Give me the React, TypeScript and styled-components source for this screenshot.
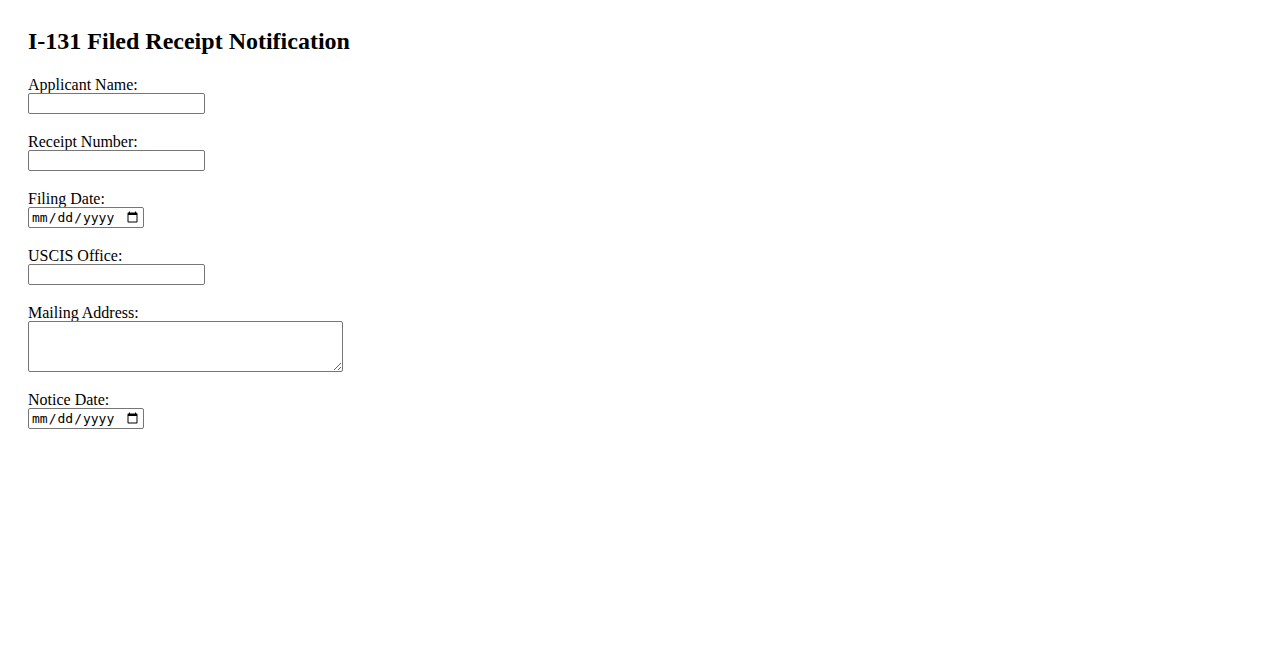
import React from "react";
import styled, { createGlobalStyle } from "styled-components";

const Global = createGlobalStyle`
  html, body { margin: 0; padding: 0; background: #fff; }
  body { font-family: "Liberation Serif", "Times New Roman", serif; color: #000; }
`;

const Page = styled.div`
  padding: 28px;
`;

const Title = styled.h2`
  margin: 0 0 20px;
  font-size: 24px;
  line-height: 27px;
  font-weight: bold;
`;

const Field = styled.div`
  display: flex;
  flex-direction: column;
  align-items: flex-start;
  margin-bottom: 18px;
`;

const Label = styled.label`
  font-size: 16px;
  line-height: 18px;
  display: block;
  padding-top: 1px;
  margin-bottom: -1px;
`;

const controlBase = `
  box-sizing: border-box;
  margin: 0;
  border: 1px solid #767676;
  border-radius: 2px;
  background: #fff;
  height: 21px;
  padding: 1px 2px;
  font-size: 13.33px;
`;

const TextInput = styled.input`
  ${controlBase}
  width: 177px;
  font-family: "Liberation Sans", Arial, sans-serif;
`;

const DateInput = styled.input`
  ${controlBase}
  width: 116px;
  font-family: "DejaVu Sans Mono", "Liberation Mono", monospace;
  font-size: 13px;
`;

const TextArea = styled.textarea`
  box-sizing: border-box;
  margin: 0;
  border: 1px solid #767676;
  border-radius: 2px;
  width: 315px;
  height: 51px;
  padding: 2px;
  font-family: "Liberation Mono", monospace;
  font-size: 13.33px;
  display: block;
`;

export default function App() {
  return (
    <Page>
      <Global />
      <Title>I-131 Filed Receipt Notification</Title>
      <Field>
        <Label htmlFor="name">Applicant Name:</Label>
        <TextInput id="name" type="text" />
      </Field>
      <Field>
        <Label htmlFor="receipt">Receipt Number:</Label>
        <TextInput id="receipt" type="text" />
      </Field>
      <Field>
        <Label htmlFor="filing">Filing Date:</Label>
        <DateInput id="filing" type="date" />
      </Field>
      <Field>
        <Label htmlFor="office">USCIS Office:</Label>
        <TextInput id="office" type="text" />
      </Field>
      <Field>
        <Label htmlFor="address">Mailing Address:</Label>
        <TextArea id="address" />
      </Field>
      <Field>
        <Label htmlFor="notice">Notice Date:</Label>
        <DateInput id="notice" type="date" />
      </Field>
    </Page>
  );
}
